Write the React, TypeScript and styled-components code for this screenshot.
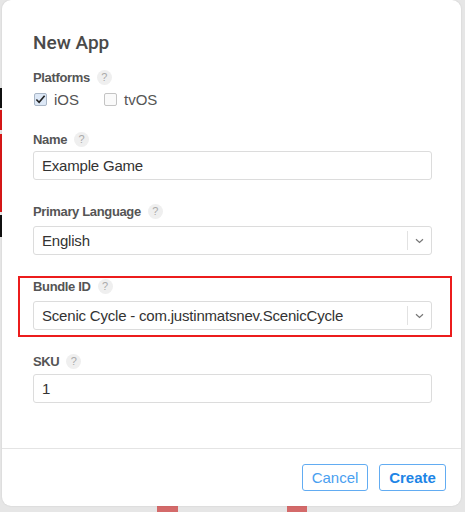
import React from "react";
import styled, { createGlobalStyle } from "styled-components";

const Global = createGlobalStyle`
  html, body { margin: 0; padding: 0; }
  body { font-family: "Liberation Sans", Arial, sans-serif; background: #e4e4e4; }
  * { box-sizing: border-box; }
`;

const Page = styled.div`
  position: relative;
  width: 465px;
  height: 512px;
  overflow: hidden;
  background: #e6e6e6;
  padding: 0 4px 6px 2px;
`;

const BgBar = styled.div<{ $top: number; $h: number; $c: string }>`
  position: absolute;
  left: 0;
  width: 3px;
  top: ${(p) => p.$top}px;
  height: ${(p) => p.$h}px;
  background: ${(p) => p.$c};
`;

const BgBlock = styled.div<{ $left: number; $w: number }>`
  position: absolute;
  bottom: 0;
  left: ${(p) => p.$left}px;
  width: ${(p) => p.$w}px;
  height: 8px;
  background: #d46a6a;
`;

const Modal = styled.div`
  position: relative;
  width: 459px;
  height: 506px;
  background: #fff;
  border-radius: 9px;
  box-shadow: 0 0 2px rgba(0, 0, 0, 0.12);
  display: flex;
  flex-direction: column;
`;

const Body = styled.div`
  flex: 1;
  padding: 32px 29px 0 31px;
  display: flex;
  flex-direction: column;
`;

const Title = styled.h1`
  margin: 0 0 15px;
  font-family: Roboto, "Liberation Sans", sans-serif;
  font-size: 19px;
  line-height: 22px;
  font-weight: 500;
  color: #4a4a4a;
`;

const Field = styled.div<{ $gap: number; $labelGap: number }>`
  position: relative;
  display: flex;
  flex-direction: column;
  gap: ${(p) => p.$labelGap}px;
  margin-bottom: ${(p) => p.$gap}px;
`;

const Highlight = styled.div`
  position: absolute;
  left: -15px;
  right: -20px;
  top: -2px;
  bottom: -7px;
  border: 2px solid #ec1c1c;
  pointer-events: none;
`;

const LabelRow = styled.div`
  display: flex;
  align-items: center;
  gap: 7px;
  height: 16px;
`;

const Label = styled.span`
  font-size: 13px;
  letter-spacing: -0.35px;
  font-weight: 700;
  color: #555;
`;

const Help = styled.span`
  width: 15px;
  height: 15px;
  border-radius: 50%;
  background: #efefef;
  color: #aaa;
  font-size: 11px;
  display: flex;
  align-items: center;
  justify-content: center;
`;

const CheckRow = styled.div`
  display: flex;
  align-items: center;
  gap: 25px;
  height: 20px;
  padding-left: 1px;
`;

const CheckItem = styled.label`
  display: flex;
  align-items: center;
  gap: 7px;
  font-size: 15px;
  color: #555;
`;

const Box = styled.span<{ $on?: boolean }>`
  width: 13px;
  height: 13px;
  border: 1px solid ${(p) => (p.$on ? "#a9b6c6" : "#c4c4c4")};
  border-radius: 2px;
  background: ${(p) => (p.$on ? "#dde8f6" : "#fafafa")};
  display: flex;
  align-items: center;
  justify-content: center;
`;

const Input = styled.div`
  height: 29px;
  border: 1px solid #dcdcdc;
  border-radius: 3px;
  padding: 0 8px;
  display: flex;
  align-items: center;
  font-size: 15px;
  letter-spacing: -0.2px;
  color: #333;
`;

const Select = styled.div`
  height: 29px;
  border: 1px solid #dcdcdc;
  border-radius: 3px;
  display: flex;
  align-items: center;
  font-size: 15px;
  letter-spacing: -0.2px;
  color: #333;
`;

const SelectValue = styled.span`
  flex: 1;
  padding-left: 8px;
`;

const Caret = styled.span`
  width: 24px;
  height: 19px;
  border-left: 1px solid #e2e2e2;
  display: flex;
  align-items: center;
  justify-content: center;
`;

const Footer = styled.div`
  height: 58px;
  border-top: 1px solid #e4e4e4;
  display: flex;
  justify-content: flex-end;
  align-items: flex-start;
  gap: 11px;
  padding: 15px 15px 0 0;
`;

const Button = styled.button<{ $primary?: boolean }>`
  height: 27px;
  width: ${(p) => (p.$primary ? 67 : 66)}px;
  border: 1px solid #62acf2;
  border-radius: 3px;
  background: #fff;
  font-family: inherit;
  font-size: 15px;
  font-weight: ${(p) => (p.$primary ? 700 : 400)};
  color: ${(p) => (p.$primary ? "#1d85e6" : "#4aa0f0")};
  padding: 0;
`;

const HelpBadge = () => <Help>?</Help>;

const Chevron = () => (
  <svg width="9" height="6" viewBox="0 0 9 6">
    <path d="M1 1.2 L4.5 4.5 L8 1.2" fill="none" stroke="#777" strokeWidth="1.2" />
  </svg>
);

const Check = () => (
  <svg width="12" height="11" viewBox="0 0 12 11">
    <path d="M1.5 5.5 L4.5 8.5 L10.5 1.5" fill="none" stroke="#222" strokeWidth="1.8" />
  </svg>
);

export default function App() {
  return (
    <>
      <Global />
      <Page>
        <BgBar $top={88} $h={20} $c="#111" />
        <BgBar $top={110} $h={20} $c="#d81818" />
        <BgBar $top={134} $h={78} $c="#d81818" />
        <BgBar $top={215} $h={22} $c="#111" />
        <BgBlock $left={157} $w={21} />
        <BgBlock $left={287} $w={20} />
        <Modal>
          <Body>
            <Title>New App</Title>
            <Field $gap={22} $labelGap={4}>
              <LabelRow>
                <Label>Platforms</Label>
                <HelpBadge />
              </LabelRow>
              <CheckRow>
                <CheckItem>
                  <Box $on>
                    <Check />
                  </Box>
                  iOS
                </CheckItem>
                <CheckItem>
                  <Box />
                  tvOS
                </CheckItem>
              </CheckRow>
            </Field>
            <Field $gap={23} $labelGap={4}>
              <LabelRow>
                <Label>Name</Label>
                <HelpBadge />
              </LabelRow>
              <Input>Example Game</Input>
            </Field>
            <Field $gap={23} $labelGap={7}>
              <LabelRow>
                <Label>Primary Language</Label>
                <HelpBadge />
              </LabelRow>
              <Select>
                <SelectValue>English</SelectValue>
                <Caret>
                  <Chevron />
                </Caret>
              </Select>
            </Field>
            <Field $gap={23} $labelGap={7}>
              <Highlight />
              <LabelRow>
                <Label>Bundle ID</Label>
                <HelpBadge />
              </LabelRow>
              <Select>
                <SelectValue>Scenic Cycle - com.justinmatsnev.ScenicCycle</SelectValue>
                <Caret>
                  <Chevron />
                </Caret>
              </Select>
            </Field>
            <Field $gap={0} $labelGap={5}>
              <LabelRow>
                <Label>SKU</Label>
                <HelpBadge />
              </LabelRow>
              <Input>1</Input>
            </Field>
          </Body>
          <Footer>
            <Button>Cancel</Button>
            <Button $primary>Create</Button>
          </Footer>
        </Modal>
      </Page>
    </>
  );
}
